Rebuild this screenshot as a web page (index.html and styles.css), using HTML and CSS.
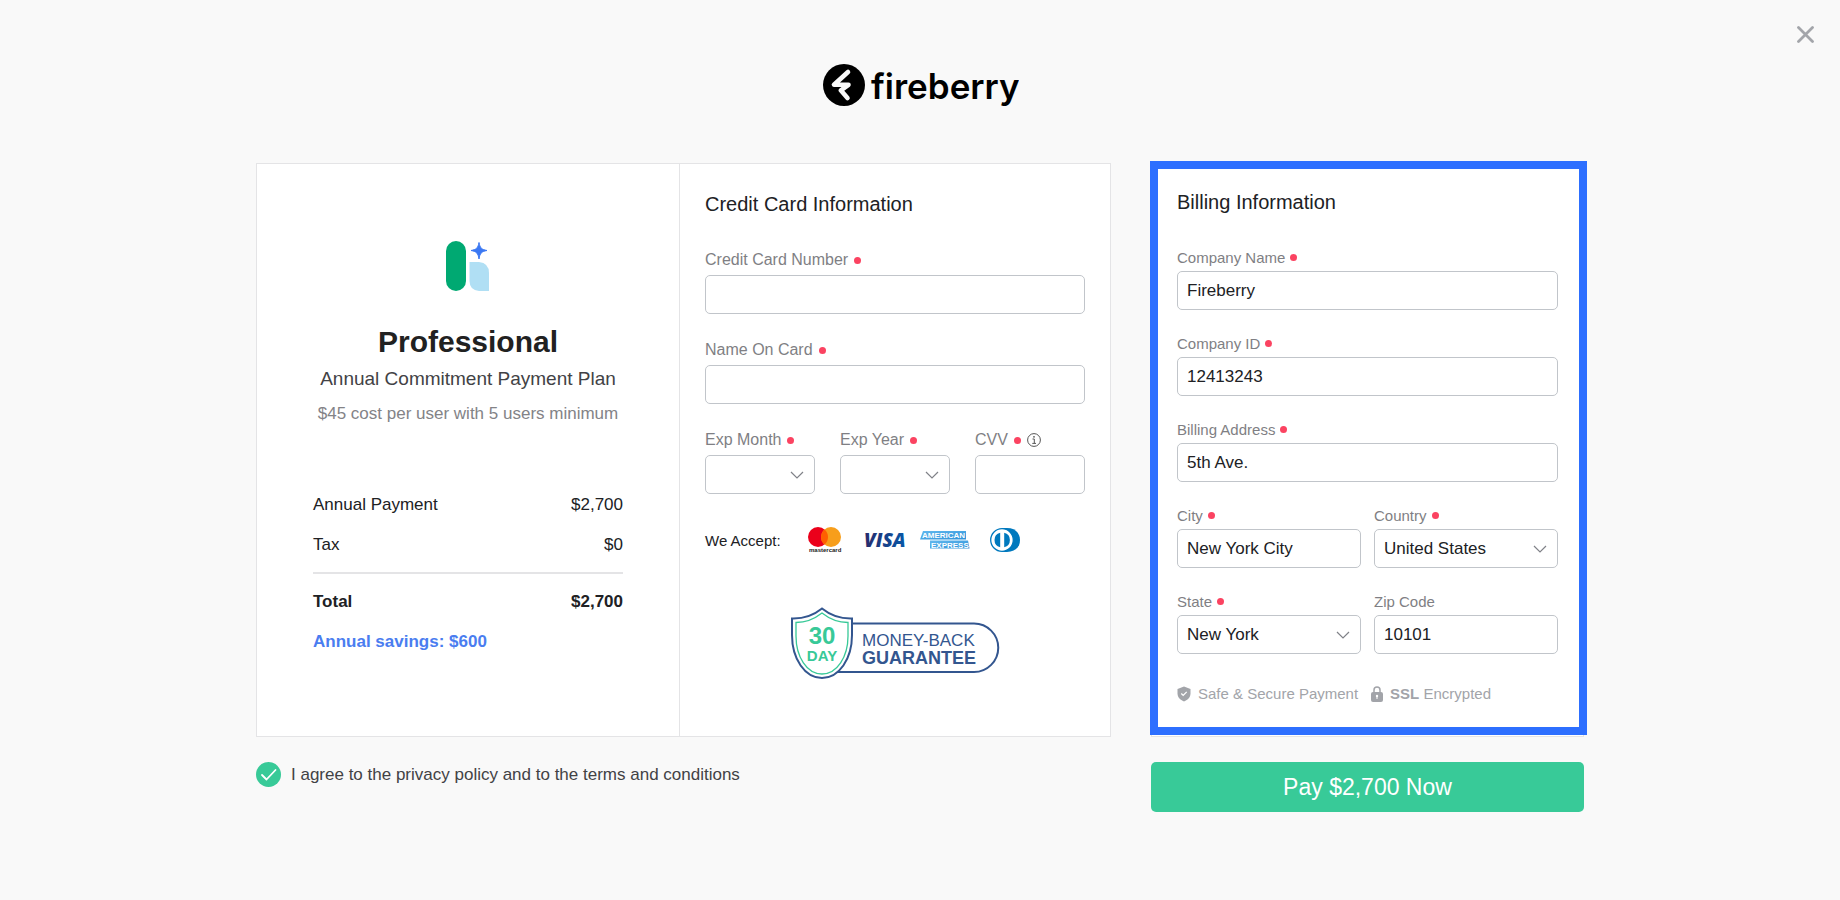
FILE: index.html
```html
<!DOCTYPE html>
<html lang="en">
<head>
<meta charset="utf-8">
<meta name="viewport" content="width=device-width, initial-scale=1">
<title>Fireberry – Checkout</title>
<link rel="stylesheet" href="styles.css">
</head>
<body>
<header class="header">
  <svg class="brand" width="198" height="48" viewBox="0 0 198 48" role="img" aria-label="fireberry">
    <circle cx="23" cy="22" r="21" fill="#000"/>
    <path d="M27 9L13 21.800H27.500L19.800 27.300L26.500 35" fill="none" stroke="#f9f9f9" stroke-width="4.600" stroke-linecap="round" stroke-linejoin="round"/>
    <text x="50" y="36" class="brand-name">fireberry</text>
  </svg>
  <button class="close" type="button" aria-label="Close">
    <svg width="17" height="17" viewBox="0 0 17 17"><path d="M1.500 1.500L15.500 15.500M15.500 1.500L1.500 15.500" stroke="#a3a5aa" stroke-width="2.800" stroke-linecap="round"/></svg>
  </button>
</header>

<main>
<form class="checkout">
  <div class="order">
    <section class="plan">
      <svg class="plan-icon" width="44" height="50" viewBox="0 0 44 50" aria-hidden="true">
        <rect width="20" height="50" rx="10" fill="#00a972"/>
        <path d="M23.500 21H33Q43 22 43 32V50H33Q23.500 49 23.500 40Z" fill="#b0dff4"/>
        <path d="M33 1.500C34 7 35.500 8.500 41 9.500C35.500 10.500 34 12 33 18C32 12 30.500 10.500 25 9.500C30.500 8.500 32 7 33 1.500Z" fill="#3b78f3" stroke="#3b78f3" stroke-width="1"/>
      </svg>
      <h1 class="plan-name">Professional</h1>
      <p class="plan-term">Annual Commitment Payment Plan</p>
      <p class="plan-cost">$45 cost per user with 5 users minimum</p>
      <dl class="bill">
        <div class="bill-row"><dt>Annual Payment</dt><dd>$2,700</dd></div>
        <div class="bill-row"><dt>Tax</dt><dd>$0</dd></div>
        <div class="bill-row total"><dt>Total</dt><dd>$2,700</dd></div>
      </dl>
      <p class="savings">Annual savings: $600</p>
    </section>

    <section class="card-info">
      <h2 class="title">Credit Card Information</h2>
      <div class="fields">
        <div class="field wide">
          <label class="label" for="number">Credit Card Number <i class="dot"></i></label>
          <input class="control" id="number" type="text">
        </div>
        <div class="field wide">
          <label class="label" for="holder">Name On Card <i class="dot"></i></label>
          <input class="control" id="holder" type="text">
        </div>
        <div class="field">
          <label class="label" for="month">Exp Month <i class="dot"></i></label>
          <select class="control" id="month"><option></option></select>
        </div>
        <div class="field">
          <label class="label" for="year">Exp Year <i class="dot"></i></label>
          <select class="control" id="year"><option></option></select>
        </div>
        <div class="field">
          <label class="label" for="cvv">CVV <i class="dot"></i>
            <svg class="info" width="14" height="14" viewBox="0 0 14 14" aria-hidden="true"><circle cx="7" cy="7" r="6.400" fill="none" stroke="#555" stroke-width="1"/><path d="M5.500 6H7.300V10.300M5.300 10.400H9" fill="none" stroke="#555" stroke-width="1"/><circle cx="7" cy="3.800" r=".9" fill="#555"/></svg>
          </label>
          <input class="control" id="cvv" type="text">
        </div>
      </div>
      <div class="accept">
        <span>We Accept:</span>
        <svg class="brands" width="216" height="28" viewBox="0 0 216 28" role="img" aria-label="Mastercard, Visa, American Express, Diners Club">
          <defs><linearGradient id="visa"><stop offset="0" stop-color="#272b6b"/><stop offset="1" stop-color="#0758a8"/></linearGradient>
          <linearGradient id="amex" x2="1" y2="1"><stop offset="0" stop-color="#62b8ee"/><stop offset="1" stop-color="#2f92d8"/></linearGradient></defs>
          <circle cx="12" cy="11" r="10" fill="#eb001b"/><circle cx="25" cy="11" r="10" fill="#f79e1b"/>
          <path d="M18.500 3.400A10 10 0 0 1 18.500 18.600A10 10 0 0 1 18.500 3.400Z" fill="#ff5f00"/>
          <text x="3" y="26" class="mc">mastercard</text>
          <text x="58" y="21" class="visa">VISA</text>
          <path d="M117 5H160V13.500H114Z" fill="url(#amex)"/><path d="M124 14.500H162L163.500 22.500H124Z" fill="url(#amex)"/>
          <text x="116" y="12" class="amex">AMERICAN</text><text x="125" y="21.500" class="amex">EXPRESS</text>
          <path d="M196 2H201C209 2 214 7 214 14S209 26 201 26H196Z" fill="#0079be"/>
          <circle cx="196" cy="14" r="11.300" fill="#fff" stroke="#0079be" stroke-width="1.300"/>
          <path d="M194.200 6.800A7.400 7.400 0 0 0 194.200 21.200ZM198.200 6.800A7.400 7.400 0 0 1 198.200 21.200Z" fill="#0079be"/>
        </svg>
      </div>
      <svg class="guarantee" width="210" height="73" viewBox="0 0 210 73" role="img" aria-label="30 day money-back guarantee">
        <path d="M40 16.500H184A24 24 0 0 1 184 65H40" fill="#fff" stroke="#33568f" stroke-width="2"/>
        <path d="M32 1.500Q45 12 62 11.500V28C62 52 49 71 32 71S2 52 2 28V11.500Q19 12 32 1.500Z" fill="#fff" stroke="#33568f" stroke-width="2"/>
        <path d="M32 6Q44 15.500 58 15.500V29C58 50 47 67 32 67S6 50 6 29V15.500Q20 15.500 32 6Z" fill="none" stroke="#38c998" stroke-width="1.300"/>
        <text x="32" y="37" class="days">30</text><text x="32" y="54" class="day">DAY</text>
        <text x="72" y="39" class="money">MONEY-BACK</text><text x="72" y="57" class="word">GUARANTEE</text>
      </svg>
    </section>
  </div>

  <section class="billing">
    <h2 class="title">Billing Information</h2>
    <div class="fields">
      <div class="field wide">
        <label class="label" for="company">Company Name <i class="dot"></i></label>
        <input class="control" id="company" type="text" value="Fireberry">
      </div>
      <div class="field wide">
        <label class="label" for="company-id">Company ID <i class="dot"></i></label>
        <input class="control" id="company-id" type="text" value="12413243">
      </div>
      <div class="field wide">
        <label class="label" for="address">Billing Address <i class="dot"></i></label>
        <input class="control" id="address" type="text" value="5th Ave.">
      </div>
      <div class="field">
        <label class="label" for="city">City <i class="dot"></i></label>
        <input class="control" id="city" type="text" value="New York City">
      </div>
      <div class="field">
        <label class="label" for="country">Country <i class="dot"></i></label>
        <select class="control" id="country"><option>United States</option></select>
      </div>
      <div class="field">
        <label class="label" for="state">State <i class="dot"></i></label>
        <select class="control" id="state"><option>New York</option></select>
      </div>
      <div class="field">
        <label class="label" for="zip">Zip Code</label>
        <input class="control" id="zip" type="text" value="10101">
      </div>
    </div>
    <div class="secure">
      <svg width="14" height="16" viewBox="0 0 14 16" aria-hidden="true"><path d="M7 .5L13.500 3V7.500C13.500 11 11 14 7 15.500C3 14 .5 11 .5 7.500V3Z" fill="#a2a4a9"/><path d="M4.300 7.500L6.200 9.400L9.700 5.900" fill="none" stroke="#fff" stroke-width="1.300"/></svg>
      <span class="secure-text">Safe &amp; Secure Payment</span>
      <svg width="12" height="16" viewBox="0 0 12 16" aria-hidden="true"><path d="M3 7V4Q3 1 6 1T9 4V7" fill="none" stroke="#a2a4a9" stroke-width="1.500"/><rect y="6" width="12" height="10" rx="2" fill="#a2a4a9"/><circle cx="6" cy="10" r="1.200" fill="#fff"/><path d="M6 10V13" stroke="#fff"/></svg>
      <span><b>SSL</b> Encrypted</span>
    </div>
  </section>

  <label class="agree"><input class="tick" type="checkbox" checked>I agree to the privacy policy and to the terms and conditions</label>
  <button class="pay" type="submit">Pay $2,700 Now</button>
</form>
</main>
</body>
</html>
```
FILE: styles.css
```css
* { box-sizing: border-box; }

body {
  margin: 0;
  background: #f9f9f9;
  color: #202124;
  font-family: "Liberation Sans", Arial, sans-serif;
  font-size: 17px;
}

h1, h2, p, dl, dd { margin: 0; }
svg { display: block; flex: none; }

.header {
  display: grid;
  grid-template-columns: 1fr auto 1fr;
  padding: 26px 26px 52px;
}
.brand { grid-column: 2; margin-top: 37px; }
.brand-name { font: 600 35px Inter, sans-serif; fill: #000; }
.close {
  justify-self: end;
  align-self: start;
  padding: 0;
  border: 0;
  background: none;
  cursor: pointer;
}

.checkout {
  display: grid;
  grid-template-columns: 855fr 433fr;
  column-gap: 40px;
  row-gap: 25px;
  max-width: 1328px;
  margin: 0 auto;
}

.order {
  display: grid;
  grid-template-columns: 423fr 430fr;
  background: #fff;
  border: 1px solid #e4e4e6;
}

.plan {
  padding: 77px 56px 64px;
  border-right: 1px solid #e4e4e6;
  text-align: center;
}
.plan-icon { margin: 0 auto 34px; }
.plan-name { font-size: 30px; line-height: 34px; color: #212121; }
.plan-term { margin-top: 8px; font-size: 19px; line-height: 24px; color: #424245; white-space: nowrap; }
.plan-cost { margin-top: 11px; line-height: 24px; color: #838387; white-space: nowrap; }

.bill { margin-top: 59px; }
.bill-row {
  display: flex;
  justify-content: space-between;
  line-height: 40px;
}
.bill-row.total {
  margin-top: 7px;
  padding-top: 8px;
  border-top: 2px solid #e4e4e6;
  font-weight: bold;
}
.savings { line-height: 40px; font-weight: bold; color: #4a7df0; text-align: left; }

.card-info { padding: 28px 25px 0; }
.title { font-size: 20px; line-height: 24px; font-weight: normal; }
.fields { display: grid; }
.card-info .fields {
  grid-template-columns: repeat(3, 1fr);
  gap: 23px 25px;
  margin-top: 31px;
}
.wide { grid-column: 1 / -1; }
.field { min-width: 0; }
.label {
  display: flex;
  align-items: center;
  gap: 6px;
  height: 28px;
  padding-bottom: 2px;
  font-size: 16px;
  color: #7f7f84;
}
.dot { width: 7px; height: 7px; border-radius: 50%; background: #fb4361; }

.control {
  display: block;
  width: 100%;
  height: 39px;
  padding: 0 9px;
  border: 1px solid #c1c5ca;
  border-radius: 5px;
  background: #fff;
  color: #202124;
  font: inherit;
}
select.control {
  appearance: none;
  background: #fff url("data:image/svg+xml,%3Csvg xmlns='http://www.w3.org/2000/svg' width='14' height='8' viewBox='0 0 14 8'%3E%3Cpath d='M1 1L7 7L13 1' fill='none' stroke='%23808288' stroke-width='1.2'/%3E%3C/svg%3E") no-repeat right 10px center;
}

.accept {
  display: flex;
  align-items: center;
  justify-content: space-between;
  margin-top: 32px;
  padding-right: 63px;
  font-size: 15px;
}
.mc { font: bold 6px "Liberation Sans", sans-serif; fill: #222; }
.visa { font: italic 800 19px "Open Sans", sans-serif; fill: url(#visa); }
.amex { font: bold 8px "Liberation Sans", sans-serif; fill: #fff; }

.guarantee { margin: 53px auto 0; }
.guarantee text { font-family: "Liberation Sans", sans-serif; }
.days, .day { font-weight: bold; fill: #38c998; text-anchor: middle; }
.days { font-size: 24px; }
.day { font-size: 15px; }
.money, .word { fill: #33568f; font-size: 17px; }
.word { font-weight: bold; font-size: 18px; }

.billing {
  position: relative;
  padding: 26px 25px 33px;
  background: #fff;
  border: 1px solid #e4e4e6;
}
.billing::after {
  content: "";
  position: absolute;
  inset: -3px -4px 1px -2px;
  border: 8px solid #2d6fff;
  pointer-events: none;
}
.billing .fields {
  grid-template-columns: 1fr 1fr;
  gap: 21px 13px;
  margin-top: 31px;
}
.billing .label { height: 26px; gap: 5px; font-size: 15px; }
.secure {
  display: flex;
  align-items: center;
  margin-top: 31px;
  gap: 7px;
  font-size: 15px;
  line-height: 18px;
  color: #a2a4a9;
}
.secure-text { margin-right: 6px; }

.agree {
  display: flex;
  align-items: center;
  align-self: start;
  gap: 10px;
  color: #424245;
}
.tick {
  appearance: none;
  width: 25px;
  height: 25px;
  margin: 0;
  border: 1px solid #c1c5ca;
  border-radius: 50%;
}
.tick:checked {
  border: 0;
  background: #38ca98 url("data:image/svg+xml,%3Csvg xmlns='http://www.w3.org/2000/svg' width='25' height='25'%3E%3Cpath d='M6 13L10.500 17.500L19.500 8' fill='none' stroke='white' stroke-width='1.800' stroke-linecap='round' stroke-linejoin='round'/%3E%3C/svg%3E") center no-repeat;
}
.pay {
  height: 50px;
  border: 0;
  border-radius: 5px;
  background: #38ca98;
  color: #fff;
  font: 23px "Liberation Sans", Arial, sans-serif;
  cursor: pointer;
}
```
